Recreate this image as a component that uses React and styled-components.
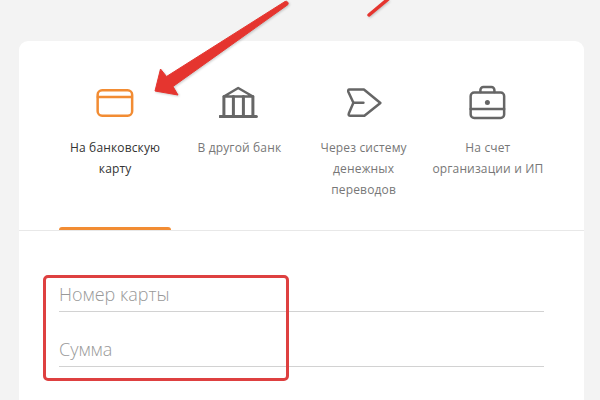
import React from "react";
import styled, { createGlobalStyle } from "styled-components";

const GlobalStyle = createGlobalStyle`
  html, body { margin: 0; padding: 0; background: #f3f3f3; }
  body { font-family: "Open Sans", "Liberation Sans", sans-serif; overflow: hidden; }
`;

const Page = styled.div`
  position: relative;
  width: 600px;
  height: 400px;
  overflow: hidden;
  box-sizing: border-box;
  padding: 41px 16px 0 19px;
  background: #f3f3f3;
`;

const Card = styled.div`
  height: 400px;
  background: #fff;
  border-radius: 9px;
`;

const Tabs = styled.div`
  display: grid;
  grid-template-columns: repeat(4, 1fr);
  column-gap: 12px;
  height: 190px;
  box-sizing: border-box;
  padding: 0 40px;
  border-bottom: 1px solid #e8e8e8;
`;

const Tab = styled.div`
  display: flex;
  flex-direction: column;
  align-items: center;
  padding-top: 42px;
  min-width: 0;
`;

const Icon = styled.svg`
  display: block;
  width: 40px;
  height: 40px;
  flex: none;
  fill: none;
  stroke: ${(p) => (p.$active ? "#f28c33" : "#666")};
  stroke-width: 2.5;
  stroke-linecap: round;
  stroke-linejoin: round;
`;

const Label = styled.div`
  margin-top: 14px;
  width: 130px;
  font-size: 12px;
  letter-spacing: 0.15px;
  line-height: 21px;
  text-align: center;
  color: ${(p) => (p.$active ? "#333" : "#777")};
`;

const Underline = styled.div`
  margin-top: auto;
  align-self: stretch;
  height: 3px;
  border-radius: 3px 3px 0 0;
  background: ${(p) => (p.$active ? "#f28c33" : "transparent")};
`;

const Form = styled.div`
  display: flex;
  flex-direction: column;
  gap: 15px;
  padding: 41px 40px 0;
`;

const Field = styled.input`
  display: block;
  width: 100%;
  height: 40px;
  box-sizing: border-box;
  margin: 0;
  padding: 5px 0 0;
  border: 0;
  border-bottom: 1px solid #d2d2d2;
  outline: 0;
  background: transparent;
  font-family: inherit;
  font-size: 18px;
  font-weight: 300;
  color: #333;
  &::placeholder { color: #999; opacity: 1; }
`;

const Highlight = styled.div`
  position: absolute;
  left: 43px;
  top: 275px;
  width: 246px;
  height: 106px;
  box-sizing: border-box;
  border: 3px solid #de4040;
  border-radius: 5px;
`;

const Arrows = styled.svg`
  position: absolute;
  left: 0;
  top: 0;
  width: 600px;
  height: 400px;
  pointer-events: none;
  filter: drop-shadow(1px 1px 1px rgba(0, 0, 0, 0.2));
`;

const tabs = [
  {
    label: ["На банковскую", "карту"],
    active: true,
    icon: (
      <>
        <rect x="3.25" y="7.25" width="34.5" height="25.5" rx="4.5" />
        <path d="M3.5 14h34" />
      </>
    ),
  },
  {
    label: ["В другой банк"],
    icon: (
      <>
        <path d="M1.5 33.5h36.5" strokeWidth="3" />
        <path d="M5.5 13.5 19.8 5l14.7 8.5z" />
        <path d="M5.5 13.5v20M15 13.5v20M25 13.5v20M34.5 13.5v20" strokeWidth="3" />
      </>
    ),
  },
  {
    label: ["Через систему", "денежных", "переводов"],
    icon: (
      <>
        <path d="M6 6.5h14.5L37 20 21 32.8H7q-2.5 0-1.5-2.5L10 19.7 5 9q-.8-2.5 1-2.5z" />
        <path d="M10 19.7h10" />
      </>
    ),
  },
  {
    label: ["На счет", "организации и ИП"],
    icon: (
      <>
        <rect x="3.25" y="9.5" width="33.5" height="25.5" rx="3.5" />
        <path d="M3.25 26h33.5" />
        <path d="M13 9V7a3 3 0 0 1 3-3h8a3 3 0 0 1 3 3v2" />
        <circle cx="20" cy="19.5" r="2.5" fill="#666" stroke="none" />
      </>
    ),
  },
];

export default function App() {
  return (
    <>
      <GlobalStyle />
      <Page>
        <Card>
          <Tabs>
            {tabs.map((t) => (
              <Tab key={t.label[0]}>
                <Icon viewBox="0.6 0 40 40" $active={t.active}>{t.icon}</Icon>
                <Label $active={t.active}>
                  {t.label.map((line) => (
                    <div key={line}>{line}</div>
                  ))}
                </Label>
                <Underline $active={t.active} />
              </Tab>
            ))}
          </Tabs>
          <Form>
            <Field placeholder="Номер карты" />
            <Field placeholder="Сумма" />
          </Form>
        </Card>
        <Highlight />
        <Arrows viewBox="0 0 600 400">
          <path d="M155 91 160.5 69 166.5 76.5 285 1.5a2.2 2.2 0 0 1 2.8 3.2L173 86.5 178 95z" fill="#e5352f" stroke="#e5352f" strokeWidth="1" strokeLinejoin="round" />
          <path d="M369 15 393 -5" fill="none" stroke="#e5352f" strokeWidth="3.5" strokeLinecap="round" />
        </Arrows>
      </Page>
    </>
  );
}
